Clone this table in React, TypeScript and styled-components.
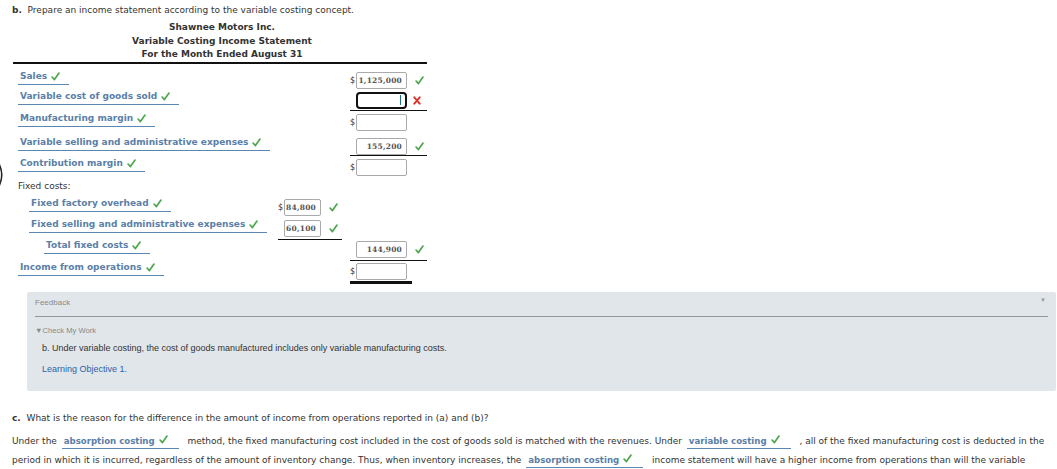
import React from "react";
import styled, { createGlobalStyle } from "styled-components";

const GlobalStyle = createGlobalStyle`
  html, body {
    margin: 0;
    padding: 0;
    background: #ffffff;
  }
  body {
    font-family: "DejaVu Sans", Verdana, sans-serif;
    color: #333333;
  }
`;

const Page = styled.div`
  position: relative;
  width: 1057px;
  height: 469px;
  overflow: hidden;
  padding: 4px 0 0 12px;
  box-sizing: border-box;
`;

const Prompt = styled.div`
  font-size: 9px;
  line-height: 12px;
  color: #333;

  b {
    font-weight: 700;
  }
`;

const Statement = styled.div`
  width: 414px;
  margin: 3px 0 0 1px;
`;

const Heading = styled.div`
  text-align: center;
  font-weight: 700;
  font-size: 9px;
  line-height: 13.5px;
  color: #333;
  padding: 2px 0 0 4px;
  border-bottom: 2px solid #111;
`;

const Row = styled.div<{ $h: number }>`
  display: grid;
  grid-template-columns: 265px 72px 77px;
  height: ${(p) => p.$h}px;
  align-items: end;
  padding-bottom: 1px;
  box-sizing: border-box;
`;

const LabelCell = styled.div<{ $indent?: number }>`
  padding-left: ${(p) => p.$indent ?? 5}px;
  margin-bottom: 4px;
`;

const Answer = styled.span`
  display: inline-flex;
  align-items: center;
  font-weight: 700;
  font-size: 9px;
  line-height: 11px;
  color: #5a80a8;
  padding: 0 9px 2px 2px;
  border-bottom: 1px solid #5a86b2;
`;

const Mark = styled.svg<{ $gap?: number }>`
  display: inline-block;
  margin-left: ${(p) => p.$gap ?? 4}px;
  flex: none;
`;

const CheckIcon: React.FC<{ gap?: number }> = ({ gap }) => (
  <Mark $gap={gap} width="9" height="9" viewBox="0 0 10 10">
    <path d="M1.2 5.6 L3.8 8.4 L8.9 1.2" stroke="#4ea64e" strokeWidth="1.9" fill="none" strokeLinecap="round" strokeLinejoin="round" />
  </Mark>
);

const CrossIcon: React.FC = () => (
  <Mark $gap={6} width="8" height="9" viewBox="0 0 8 9">
    <path d="M1.3 1.3 L6.7 7.7 M6.7 1.3 L1.3 7.7" stroke="#e0302c" strokeWidth="1.9" fill="none" strokeLinecap="round" />
  </Mark>
);

const PlainLabel = styled.div`
  font-size: 9px;
  line-height: 11px;
  color: #333;
  padding-left: 5px;
`;

const AmountCell = styled.div<{ $rule?: number; $ruleWidth?: number }>`
  height: ${(p) => (p.$rule !== undefined ? 18 + p.$rule : 17)}px;
  width: ${(p) => (p.$ruleWidth ? `${p.$ruleWidth}px` : "auto")};
  display: flex;
  align-items: flex-end;
  box-sizing: border-box;
  border-top: ${(p) => (p.$rule !== undefined ? "1px solid #111" : "none")};
  position: relative;
`;

const AmountInner = styled.div`
  height: 17px;
  display: flex;
  align-items: center;
`;

const Dollar = styled.span`
  width: 6px;
  font-size: 8px;
  color: #333;
`;

const Box = styled.div<{ $w: number; $focus?: boolean }>`
  width: ${(p) => p.$w}px;
  height: 17px;
  box-sizing: border-box;
  border: ${(p) => (p.$focus ? "2px solid #111" : "1px solid #aaa")};
  border-radius: ${(p) => (p.$focus ? 4 : 2)}px;
  background: #fff;
  font-family: "DejaVu Serif", Georgia, serif;
  font-weight: 700;
  font-size: 7.5px;
  color: #555;
  display: flex;
  align-items: center;
  justify-content: flex-end;
  padding-right: 4px;
  letter-spacing: 0.2px;
`;

const Caret = styled.span`
  width: 1px;
  height: 10px;
  background: #1b6f8a;
`;

const DoubleRule = styled.div`
  position: absolute;
  left: 0;
  bottom: -4px;
  width: 62px;
  height: 3px;
  background: #111;
`;

const Paren = styled.svg`
  position: absolute;
  left: -4px;
  top: 161px;
`;

const Feedback = styled.div`
  margin: 13px 0 0 15px;
  width: 1029px;
  height: 99px;
  background: #e1e6ea;
  border-radius: 2px;
  padding: 6px 8px 0 8px;
  box-sizing: border-box;
  font-family: "Liberation Sans", Arial, sans-serif;
  position: relative;
`;

const FeedbackTitle = styled.div`
  font-size: 8px;
  color: #888;
  line-height: 9px;
  padding-bottom: 9px;
  border-bottom: 1px solid #8f979d;
`;

const Toggle = styled.span`
  position: absolute;
  right: 10px;
  top: 5px;
  font-size: 6px;
  color: #999;
`;

const CheckWork = styled.div`
  font-size: 7.6px;
  color: #888;
  margin-top: 9px;
  line-height: 9px;
`;

const FeedbackText = styled.div<{ $link?: boolean }>`
  font-size: 9px;
  color: ${(p) => (p.$link ? "#2a63a8" : "#333")};
  margin: 8px 0 0 7px;
  line-height: 11px;
  & + & {
    margin-top: 10px;
  }
`;

const PartC = styled.div`
  margin-top: 21px;
  font-size: 9px;
  line-height: 12px;
  color: #333;

  b {
    font-weight: 700;
  }
`;

const Para = styled.p`
  margin: 8px 0 0 0;
  width: 1045px;
  font-size: 9px;
  line-height: 19px;
  color: #333;
`;

const InlineAnswer = styled.span`
  display: inline-block;
  font-weight: 700;
  font-size: 8.6px;
  line-height: 12px;
  color: #5a80a8;
  padding: 0 11px 1px 2px;
  margin: 0 6px 0 2px;
  border-bottom: 1px solid #5a86b2;
`;

type Amount = {
  dollar?: boolean;
  value?: string;
  w: number;
  focus?: boolean;
  mark?: "ok" | "bad";
  doubleRule?: boolean;
};

type Line = {
  label?: string;
  plain?: string;
  indent?: number;
  h: number;
  mid?: Amount;
  right?: Amount;
  midRule?: number;
  rightRule?: number;
};

const lines: Line[] = [
  { label: "Sales", h: 20, right: { dollar: true, value: "1,125,000", w: 51, mark: "ok" } },
  { label: "Variable cost of goods sold", h: 22, right: { w: 51, focus: true, mark: "bad" } },
  { label: "Manufacturing margin", h: 24, rightRule: 3, right: { dollar: true, w: 51 } },
  { label: "Variable selling and administrative expenses", h: 21, right: { value: "155,200", w: 51, mark: "ok" } },
  { label: "Contribution margin", h: 24, rightRule: 3, right: { dollar: true, w: 51 } },
  { plain: "Fixed costs:", h: 16 },
  { label: "Fixed factory overhead", indent: 16, h: 21, mid: { dollar: true, value: "84,800", w: 37, mark: "ok" } },
  { label: "Fixed selling and administrative expenses", indent: 16, h: 21, mid: { value: "60,100", w: 37, mark: "ok" } },
  { label: "Total fixed costs", indent: 31, h: 22, midRule: 1, right: { value: "144,900", w: 51, mark: "ok" } },
  { label: "Income from operations", h: 24, rightRule: 2, right: { dollar: true, w: 51, doubleRule: true } },
];

const AmountView: React.FC<{ a?: Amount; rule?: number; ruleWidth?: number }> = ({ a, rule, ruleWidth }) => (
  <AmountCell $rule={rule} $ruleWidth={ruleWidth}>
    {a && (
      <AmountInner>
        <Dollar>{a.dollar ? "$" : ""}</Dollar>
        <Box $w={a.w} $focus={a.focus}>
          {a.focus ? <Caret /> : a.value}
        </Box>
        {a.mark === "ok" && <CheckIcon gap={8} />}
        {a.mark === "bad" && <CrossIcon />}
      </AmountInner>
    )}
    {a?.doubleRule && <DoubleRule />}
  </AmountCell>
);

const App: React.FC = () => {
  return (
    <>
      <GlobalStyle />
      <Page>
        <Paren width="10" height="28" viewBox="0 0 10 28">
          <path d="M2 1 Q9.5 14 2 27" stroke="#222" strokeWidth="1.6" fill="none" />
        </Paren>
        <Prompt>
          <b>b.</b>&nbsp; Prepare an income statement according to the variable costing concept.
        </Prompt>
        <Statement>
          <Heading>
            Shawnee Motors Inc.
            <br />
            Variable Costing Income Statement
            <br />
            For the Month Ended August 31
          </Heading>
          {lines.map((l, i) => (
            <Row key={i} $h={l.h}>
              {l.plain ? (
                <PlainLabel>{l.plain}</PlainLabel>
              ) : (
                <LabelCell $indent={l.indent}>
                  <Answer>
                    {l.label}
                    <CheckIcon />
                  </Answer>
                </LabelCell>
              )}
              <AmountView a={l.mid} rule={l.midRule} ruleWidth={l.midRule !== undefined ? 64 : undefined} />
              <AmountView a={l.right} rule={l.rightRule} />
            </Row>
          ))}
        </Statement>
        <Feedback>
          <FeedbackTitle>Feedback</FeedbackTitle>
          <Toggle>▼</Toggle>
          <CheckWork>▼Check My Work</CheckWork>
          <FeedbackText>
            b. Under variable costing, the cost of goods manufactured includes only variable manufacturing costs.
          </FeedbackText>
          <FeedbackText $link>Learning Objective 1.</FeedbackText>
        </Feedback>
        <PartC>
          <b>c.</b>&nbsp; What is the reason for the difference in the amount of income from operations reported in (a) and (b)?
        </PartC>
        <Para>
          Under the{" "}
          <InlineAnswer>
            absorption costing
            <CheckIcon />
          </InlineAnswer>{" "}
          method, the fixed manufacturing cost included in the cost of goods sold is matched with the revenues. Under{" "}
          <InlineAnswer>
            variable costing
            <CheckIcon />
          </InlineAnswer>{" "}
          , all of the fixed manufacturing cost is deducted in the period in which it is incurred, regardless of the amount of inventory change. Thus, when inventory increases, the{" "}
          <InlineAnswer>
            absorption costing
            <CheckIcon />
          </InlineAnswer>{" "}
          income statement will have a higher income from operations than will the variable costing income statement.
        </Para>
      </Page>
    </>
  );
};

export default App;
